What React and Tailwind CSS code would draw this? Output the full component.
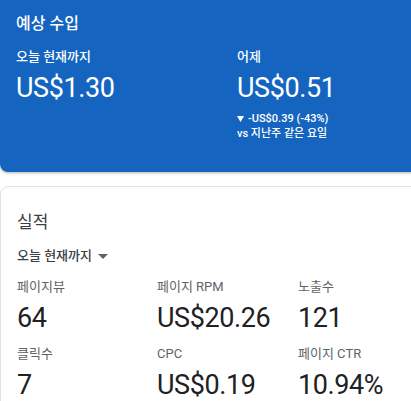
const KR = { fontFamily: "Roboto, 'Noto Sans CJK KR', sans-serif" };

function Metric({ label, value }) {
  return (
    <div>
      <div className="text-[13px] leading-[20px] text-[#5f6368]">{label}</div>
      <div className="mt-[4px] text-[27px] leading-[34px] tracking-[-0.4px] text-[#202124]">{value}</div>
    </div>
  );
}

export default function App() {
  return (
    <div className="h-[401px] w-[411px] overflow-hidden bg-white" style={KR}>
      <div className="h-[172px] w-[440px] rounded-b-[8px] bg-[#1565c0] px-4 pt-[12px] text-white shadow-[0_1px_3px_rgba(0,0,0,0.3)]">
        <div className="text-[16px] leading-[24px] font-medium">예상 수입</div>
        <div className="mt-[11px] grid grid-cols-[221px_1fr]">
          <div>
            <div className="text-[13px] leading-[20px] font-medium">오늘 현재까지</div>
            <div className="mt-[4px] text-[27px] leading-[34px] tracking-[-0.4px]">US$1.30</div>
          </div>
          <div>
            <div className="text-[13px] leading-[20px] font-medium">어제</div>
            <div className="mt-[4px] text-[27px] leading-[34px] tracking-[-0.4px]">US$0.51</div>
            <div className="mt-[6px] text-[11px] leading-[15px] font-medium">
              <div className="flex items-center gap-[4px]">
                <svg width="7" height="6" viewBox="0 0 7 6"><path d="M0 0h7L3.5 6z" fill="white" /></svg>
                -US$0.39 (-43%)
              </div>
              <div>vs 지난주 같은 요일</div>
            </div>
          </div>
        </div>
      </div>
      <div className="mt-[14px] w-[440px] rounded-t-[8px] border border-[#e3e3e3] px-4 pt-[23px] pb-6">
        <div className="text-[17px] leading-[24px] text-[#3c4043]">실적</div>
        <div className="mt-[12px] flex items-center gap-[6px] text-[13px] leading-[20px] font-medium text-[#3c4043]">
          오늘 현재까지
          <svg width="10" height="5" viewBox="0 0 10 5"><path d="M0 0h10L5 5z" fill="#5f6368" /></svg>
        </div>
        <div className="mt-[11px] grid grid-cols-[140px_141px_1fr] gap-y-[9px]">
          <Metric label="페이지뷰" value="64" />
          <Metric label="페이지 RPM" value="US$20.26" />
          <Metric label="노출수" value="121" />
          <Metric label="클릭수" value="7" />
          <Metric label="CPC" value="US$0.19" />
          <Metric label="페이지 CTR" value="10.94%" />
        </div>
      </div>
    </div>
  );
}
